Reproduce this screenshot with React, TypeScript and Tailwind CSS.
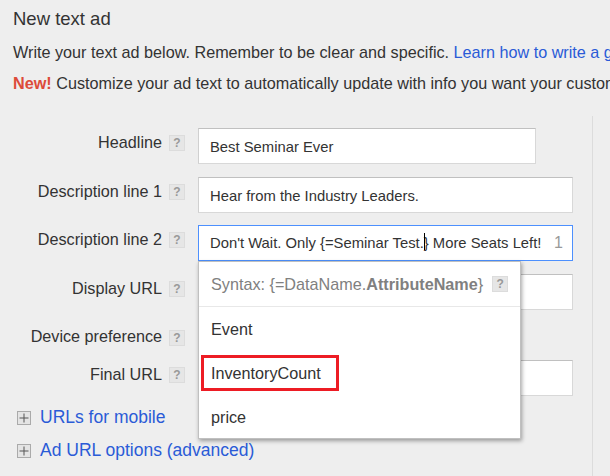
const Help = () => (
  <span className="flex h-[16px] w-[16px] shrink-0 items-center justify-center border border-[#dcdcdc] bg-[#e6e6e6] text-[12px] font-bold leading-none text-[#999]">
    ?
  </span>
);

const Expand = ({ label }: { label: string }) => (
  <div className="flex h-[33px] items-center text-[17.5px] text-[#2a5bd7]">
    <span className="ml-[17px] mr-[9px] flex h-[14px] w-[14px] items-center justify-center border border-[#aaa] bg-[#e4e4e4]">
      <svg width="10" height="10" viewBox="0 0 10 10">
        <path d="M5 0.5v9M0.5 5h9" stroke="#555" strokeWidth="1" fill="none" />
      </svg>
    </span>
    {label}
  </div>
);

const Row = ({
  label,
  width = "w-[375px]",
  children,
  className = "",
}: {
  label: string;
  width?: string;
  children?: React.ReactNode;
  className?: string;
}) => (
  <div className={`flex ${className}`}>
    <div className="flex w-[185px] items-start justify-end gap-[7px] whitespace-nowrap pt-[7px]">
      <span className="-mt-px leading-[16px]">{label}</span>
      <Help />
    </div>
    <div className={`relative ml-[13px] h-[36px] ${width}`}>{children}</div>
  </div>
);

const boxClass =
  "flex h-full items-center border border-t-[#c0c0c0] border-l-[#d0d0d0] border-r-[#d8d8d8] border-b-[#d8d8d8] bg-white px-[11px] pt-[2px] text-[14.8px] text-[#333]";

export default function App() {
  return (
    <div className="h-[476px] w-[610px] overflow-hidden bg-[#eeeeee] font-['Liberation_Sans',Arial,sans-serif] text-[16.2px] text-[#333]">
      <div className="whitespace-nowrap pl-[13px] pt-[9px]">
        <h1 className="text-[18.5px] leading-[20px]">New text ad</h1>
        <p className="mt-[14px] leading-[18px]">
          Write your text ad below. Remember to be clear and specific.{" "}
          <span className="text-[#2a5bd7]">Learn how to write a great text ad</span>
        </p>
        <p className="mt-[13px] leading-[18px]">
          <span className="font-bold text-[#dd4b39]">New!</span> Customize your ad text to
          automatically update with info you want your customers to see
        </p>
      </div>

      <div className="mt-[24px] h-[360px] w-[593px] border-r border-[#dcdcdc] pt-[12px]">
        <Row label="Headline" width="w-[338px]">
          <div className={boxClass}>Best Seminar Ever</div>
        </Row>

        <Row label="Description line 1" className="mt-[13px]">
          <div className={boxClass}>Hear from the Industry Leaders.</div>
        </Row>

        <Row label="Description line 2" className="mt-[12px]">
          <div className="flex h-full items-center justify-between whitespace-nowrap border border-[#4d90fe] bg-white pl-[11px] pr-[9px] text-[14.8px] text-[#333]">
            <span className="relative">
              Don't Wait. Only {"{"}=Seminar Test.
              <span className="absolute top-[1px] h-[17px] w-px bg-black" />
              {"}"} More Seats Left!
            </span>
            <span className="text-[16px] text-[#999]">1</span>
          </div>

          <div className="absolute left-0 top-full z-10 h-[178px] w-[323px] border border-[#c0c0c0] bg-white shadow-[1px_2px_4px_rgba(0,0,0,0.35)]">
            <div className="flex h-[45px] items-center gap-[9px] whitespace-nowrap border-b border-[#e8e8e8] pl-[12px] text-[#808080]">
              <span>
                Syntax: {"{"}=DataName.<b>AttributeName</b>
                {"}"}
              </span>
              <Help />
            </div>
            <div className="flex h-[44px] items-center pl-[12px]">Event</div>
            <div className="flex h-[44px] items-center pl-[2px]">
              <span className="flex h-[36px] w-[138px] items-center border-[3px] border-[#ed1c24] pl-[7px]">
                InventoryCount
              </span>
            </div>
            <div className="flex h-[44px] items-center pl-[12px]">price</div>
          </div>
        </Row>

        <Row label="Display URL" className="mt-[13px]">
          <div className={boxClass} />
        </Row>

        <div className="mt-[20px] flex h-[16px] w-[185px] items-start justify-end gap-[7px]">
          <span className="-mt-[2px] leading-[16px]">Device preference</span>
          <Help />
        </div>

        <Row label="Final URL" className="mt-[14px]">
          <div className={boxClass} />
        </Row>

        <div className="mt-[5px]">
          <Expand label="URLs for mobile" />
          <Expand label="Ad URL options (advanced)" />
        </div>
      </div>
    </div>
  );
}
